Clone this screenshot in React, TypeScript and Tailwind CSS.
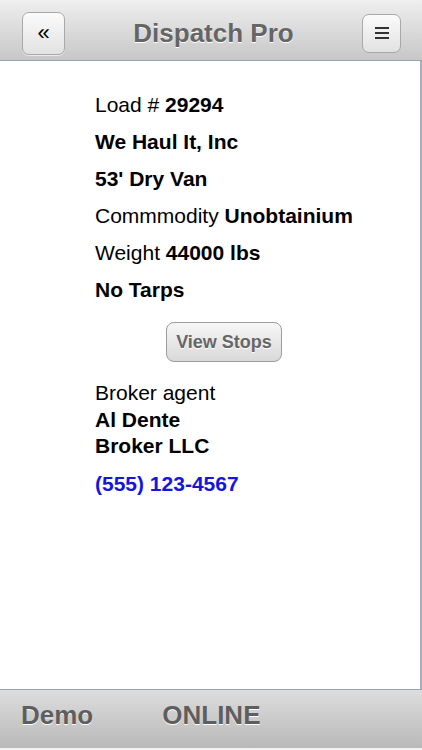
import React from "react";

const font = { fontFamily: '"Liberation Sans", Arial, Helvetica, sans-serif' };

export default function App() {
  return (
    <div
      className="w-[422px] h-[750px] flex flex-col bg-white overflow-hidden"
      style={font}
    >
      {/* Header */}
      <header className="h-[61px] shrink-0 flex items-center border-b border-[#9ba4b1] bg-gradient-to-b from-[#efefef] to-[#c7c7c7]">
        <button className="ml-[22px] mt-[6px] w-[43px] h-[43px] rounded-[7px] border border-[#a9a9a9] bg-gradient-to-b from-[#fbfbfb] to-[#e2e2e2] flex items-center justify-center text-[22px] text-black leading-none shadow-[0_1px_0_rgba(255,255,255,0.6)]">
          «
        </button>
        <div className="flex-1 text-center text-[26px] font-bold text-[#656565] [text-shadow:0_1px_0_#ffffff] mt-[6px]">
          Dispatch Pro
        </div>
        <button className="mr-[21px] mt-[6px] w-[39px] h-[39px] rounded-[7px] border border-[#a9a9a9] bg-gradient-to-b from-[#fbfbfb] to-[#e2e2e2] flex flex-col items-center justify-center gap-[3px]">
          <span className="block w-[14px] h-[2px] bg-[#333]" />
          <span className="block w-[14px] h-[2px] bg-[#333]" />
          <span className="block w-[14px] h-[2px] bg-[#333]" />
        </button>
      </header>

      {/* Main */}
      <main className="flex-1 border-r-2 border-[#a3aec0] pt-[25px] pl-[95px]">
        <div className="w-[258px] text-[21px] text-black">
          <div className="leading-[37px]">
            Load # <b>29294</b>
          </div>
          <div className="leading-[37px] font-bold">We Haul It, Inc</div>
          <div className="leading-[37px] font-bold">53' Dry Van</div>
          <div className="leading-[37px] whitespace-nowrap">
            Commmodity <b>Unobtainium</b>
          </div>
          <div className="leading-[37px]">
            Weight <b>44000 lbs</b>
          </div>
          <div className="leading-[37px] font-bold">No Tarps</div>

          <div className="flex justify-center mt-[14px]">
            <button className="w-[116px] h-[40px] rounded-[8px] border border-[#9c9c9c] bg-gradient-to-b from-[#f7f7f7] to-[#d9d9d9] text-[18px] font-bold text-[#666] [text-shadow:0_1px_0_#ffffff]">
              View Stops
            </button>
          </div>

          <div className="mt-[18px] leading-[26.5px]">
            <div>Broker agent</div>
            <div className="font-bold">Al Dente</div>
            <div className="font-bold">Broker LLC</div>
          </div>
          <div className="mt-[11px] leading-[26.5px] font-bold text-[#1515e0]">
            (555) 123-4567
          </div>
        </div>
      </main>

      {/* Footer */}
      <footer className="h-[61px] shrink-0 border-t border-[#9ba4b1] border-b-2 border-b-[#f2f2f2] bg-gradient-to-b from-[#dddddd] to-[#b9b9b9] flex items-center pl-[21px] text-[26px] font-bold text-[#5e5e5e] [text-shadow:0_1px_0_#ffffff]">
        <span className="-mt-[7px]">Demo</span>
        <span className="ml-[69px] -mt-[7px]">ONLINE</span>
      </footer>
    </div>
  );
}
